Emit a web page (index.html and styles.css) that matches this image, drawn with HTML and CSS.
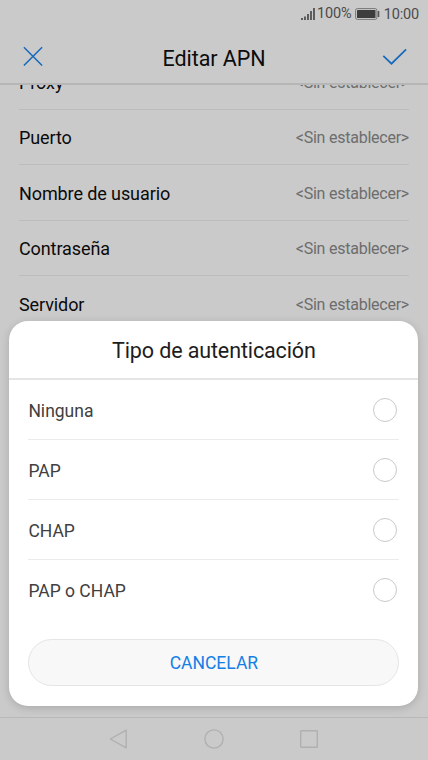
FILE: index.html
```html
<!DOCTYPE html>
<html lang="es">
<head>
<meta charset="utf-8">
<title>Editar APN</title>
<link rel="stylesheet" href="styles.css">
</head>
<body>
<div class="screen">
  <div class="status">
    <svg class="signal" width="15" height="14" viewBox="0 0 15 14"><path d="M1 11v2M4 9.5V13M7 7v6M10 4v9M13 1v12" fill="none" stroke="#4a4a4a" stroke-width="1.7"/></svg>
    <span class="percent">100%</span>
    <svg class="battery" width="25" height="12" viewBox="0 0 25 12"><rect x=".6" y=".6" width="21.3" height="10.8" rx="1.7" fill="none" stroke="#777"/><rect x="2" y="2" width="18.5" height="8" rx=".5" fill="#3d3d3d"/><path d="M23.5 3v6" stroke="#555" stroke-width="1.6"/></svg>
    <span class="time">10:00</span>
  </div>
  <header class="bar">
    <svg width="20" height="20" viewBox="0 0 20 20"><path d="M.9 1.3l18.2 18.2M19.1 1.3L.9 19.5" fill="none" stroke="#1769bd" stroke-width="1.5"/></svg>
    <h1>Editar APN</h1>
    <svg width="25" height="17" viewBox="0 0 25 17"><path d="M1.3 7.8l8.2 7.9L24.1 1.3" fill="none" stroke="#1769bd" stroke-width="1.7"/></svg>
  </header>
  <main class="list">
    <div class="row"><span class="name">Proxy</span><span class="value">&lt;Sin establecer&gt;</span></div>
    <div class="row"><span class="name">Puerto</span><span class="value">&lt;Sin establecer&gt;</span></div>
    <div class="row"><span class="name">Nombre de usuario</span><span class="value">&lt;Sin establecer&gt;</span></div>
    <div class="row"><span class="name">Contraseña</span><span class="value">&lt;Sin establecer&gt;</span></div>
    <div class="row"><span class="name">Servidor</span><span class="value">&lt;Sin establecer&gt;</span></div>
  </main>
  <nav class="nav">
    <svg width="20" height="20" viewBox="0 0 20 20"><path d="M17.2 1.2v17.6L1.3 10z" fill="none" stroke="#b0b0b0" stroke-width="1.4" stroke-linejoin="round"/></svg>
    <svg width="20" height="20" viewBox="0 0 20 20"><circle cx="10" cy="10" r="9.1" fill="none" stroke="#b0b0b0" stroke-width="1.4"/></svg>
    <svg width="20" height="20" viewBox="0 0 20 20"><rect x="1.7" y="1.7" width="16.6" height="16.6" rx=".6" fill="none" stroke="#b0b0b0" stroke-width="1.4"/></svg>
  </nav>
  <section class="dialog">
    <h2>Tipo de autenticación</h2>
    <div class="options">
      <div class="option"><span>Ninguna</span><i class="radio"></i></div>
      <div class="option"><span>PAP</span><i class="radio"></i></div>
      <div class="option"><span>CHAP</span><i class="radio"></i></div>
      <div class="option"><span>PAP o CHAP</span><i class="radio"></i></div>
    </div>
    <button class="cancel">CANCELAR</button>
  </section>
</div>
</body>
</html>
```
FILE: styles.css
```css
* { box-sizing: border-box; }
body { margin: 0; font-family: Roboto, sans-serif; }
svg { display: block; flex: none; }
.screen {
  position: relative;
  display: flex;
  flex-direction: column;
  width: 428px;
  height: 760px;
  overflow: hidden;
  background: #cacaca;
}
.status {
  display: flex;
  justify-content: flex-end;
  height: 29px;
  padding-right: 9px;
  font-size: 14.5px;
  line-height: 30px;
  color: #4a4a4a;
}
.signal { margin: 7px 1px 0 0; }
.percent { margin-right: 3px; line-height: 28px; letter-spacing: -.1px; }
.battery { margin: 8px 4px 0 0; }
.time { letter-spacing: -.15px; }
.bar {
  display: flex;
  align-items: center;
  justify-content: space-between;
  height: 56px;
  padding: 0 21px 0 23px;
  border-bottom: 2px solid #b6b6b6;
}
.bar h1 { margin: 4px 0 0 3px; font-size: 21.5px; font-weight: 400; letter-spacing: -.05px; color: #0c0c0c; }
.list { flex: 1; overflow: hidden; padding: 0 19px; }
.row {
  display: flex;
  align-items: center;
  justify-content: space-between;
  height: 55.5px;
  padding-top: 2px;
  border-bottom: 1px solid #bcbcbc;
}
.row:first-child { margin-top: -31px; }
.name { font-size: 18px; letter-spacing: -.1px; color: #0a0a0a; }
.value { font-size: 16px; letter-spacing: -.24px; color: #6d6d6d; }
.nav {
  display: flex;
  align-items: center;
  justify-content: center;
  gap: 75px;
  height: 43px;
  border-top: 1px solid #b8b8b8;
}
.dialog {
  position: absolute;
  left: 9.4px;
  top: 320.5px;
  width: 409px;
  height: 385px;
  border-radius: 19px;
  background: #fff;
  box-shadow: 0 2px 8px rgba(0, 0, 0, .16);
}
.dialog h2 {
  height: 59px;
  margin: 0;
  border-bottom: 2px solid #e5e5e5;
  font-size: 21.5px;
  font-weight: 400;
  letter-spacing: -.12px;
  line-height: 59px;
  text-align: center;
  color: #1d1d1d;
}
.options { padding: 0 19px; }
.option {
  display: flex;
  align-items: center;
  justify-content: space-between;
  height: 60.2px;
  padding: 1px 2px 0 0;
  border-bottom: 1px solid #ebebeb;
  font-size: 17.5px;
  color: #404040;
}
.option span { padding-top: 2px; }
.option:last-child { border-bottom-color: transparent; }
.radio { width: 24px; height: 24px; border: 1.3px solid #cacaca; border-radius: 50%; }
.cancel {
  display: block;
  width: 371px;
  height: 47px;
  margin: 18.5px 19px 0;
  padding: 2px 0 0;
  border: 1px solid #e5e5e5;
  border-radius: 24px;
  background: #f8f8f9;
  font-family: inherit;
  font-size: 17.5px;
  color: #147fe5;
}
```
